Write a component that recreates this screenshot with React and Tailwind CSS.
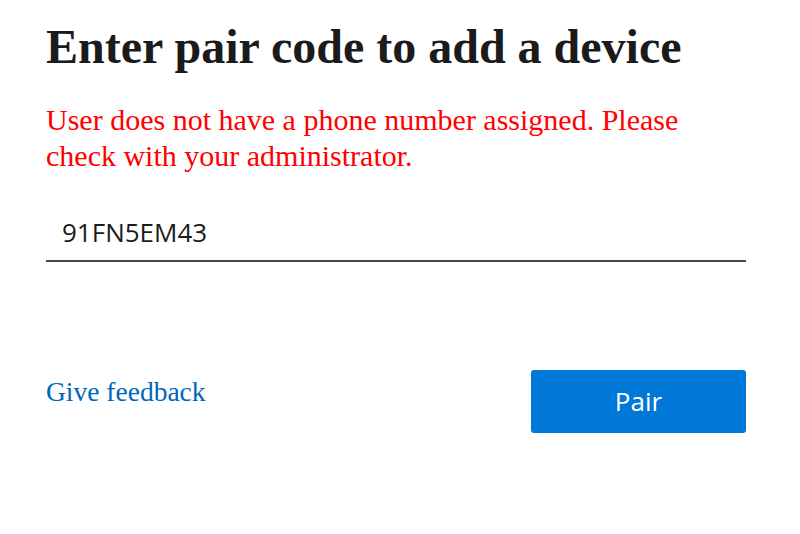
export default function App() {
  return (
    <div className="min-h-[534px] w-[800px] bg-white pl-[46px] pr-[54px] pt-[19px]">
      <h1 className="font-['Liberation_Serif',serif] text-[48px] font-bold leading-[56px] text-[#1b1b1b]">
        Enter pair code to add a device
      </h1>

      <p className="mt-[27px] max-w-[690px] font-['Liberation_Serif',serif] text-[30px] leading-[36px] text-[#ff0000]">
        User does not have a phone number assigned. Please check with your administrator.
      </p>

      {/* pair code field */}
      <div className="mt-[40px] border-b-2 border-[#464646] pb-[10px]">
        <input
          readOnly
          value="91FN5EM43"
          className="w-full bg-transparent px-[16px] font-['Open_Sans',sans-serif] text-[26px] leading-[36px] text-[#1b1b1b] outline-none"
        />
      </div>

      <div className="mt-[108px] flex items-start justify-between">
        <a className="mt-[5px] font-['Liberation_Serif',serif] text-[27.5px] leading-[34px] text-[#0067b8]">
          Give feedback
        </a>
        <button className="h-[63px] w-[215px] rounded-[3px] bg-[#0078d7] font-['Open_Sans',sans-serif] text-[26px] text-white">
          Pair
        </button>
      </div>
    </div>
  );
}
